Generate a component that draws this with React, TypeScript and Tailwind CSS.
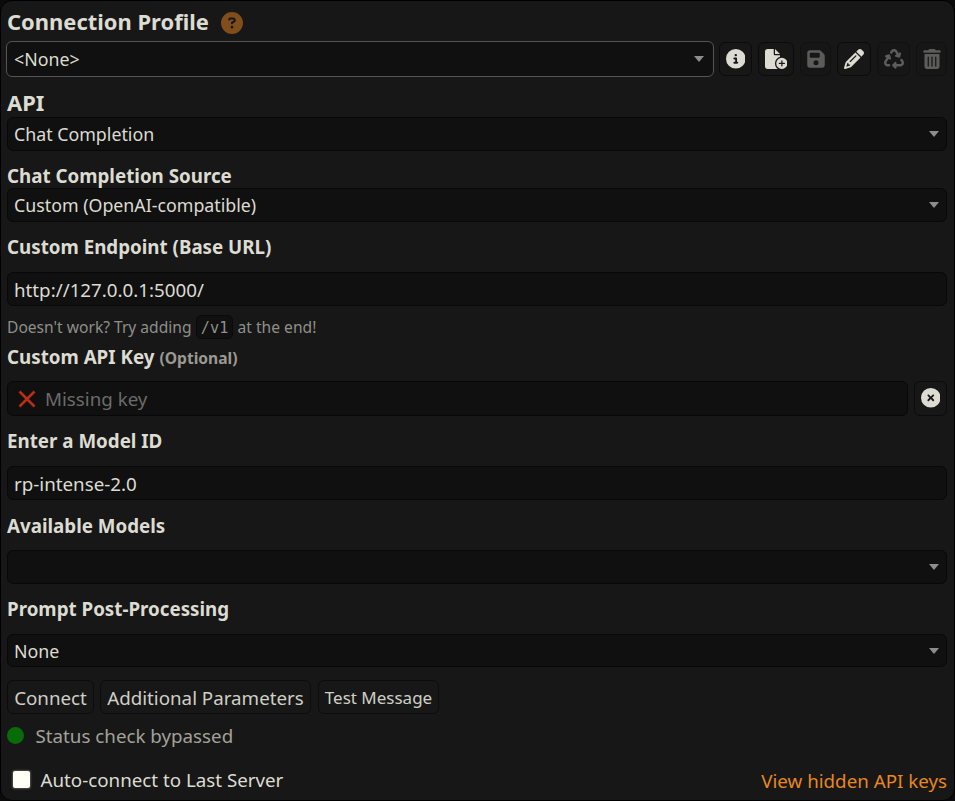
import type { ReactNode } from "react";
import {
  FaCircleInfo,
  FaCircleQuestion,
  FaCircleXmark,
  FaFileCirclePlus,
  FaFloppyDisk,
  FaPencil,
  FaRecycle,
  FaTrashCan,
} from "react-icons/fa6";

const field =
  "flex items-center rounded-[6px] border border-[#080808] bg-[#101010] px-[6px]";

function Caret() {
  return (
    <svg className="ml-auto mr-px h-[6px] w-[10px] shrink-0" viewBox="0 0 10 6">
      <path d="M0 0h10L5 6z" fill="#8d8d8d" />
    </svg>
  );
}

function Select({ value, className }: { value: string; className: string }) {
  return (
    <div className={`${field} text-[17.8px] ${className}`}>
      <span>{value}</span>
      <Caret />
    </div>
  );
}

function Heading({ children, className }: { children: ReactNode; className: string }) {
  return <h4 className={`flex items-center font-bold ${className}`}>{children}</h4>;
}

function IconButton({
  children,
  className,
  disabled = false,
}: {
  children: ReactNode;
  className: string;
  disabled?: boolean;
}) {
  return (
    <button
      className={`flex h-[34px] shrink-0 items-center justify-center rounded-[6px] border text-[20px] ${
        disabled ? "border-[#111111] bg-[#161616] text-[#5c5c5b]" : "border-[#0b0b0b] bg-[#171717]"
      } ${className}`}
    >
      {children}
    </button>
  );
}

const textButton =
  "flex h-[34px] items-center justify-center whitespace-nowrap rounded-[6px] border border-[#0c0c0c] pt-[2px]";

export default function App() {
  return (
    <div className="h-[801px] w-[955px] overflow-hidden bg-[#0b0b0b] font-['Noto_Sans',sans-serif] text-[18.75px] leading-6 text-[#dcdcd2]">
      <main className="flex h-[801px] w-[955px] flex-col rounded-[12px] border border-black bg-[#171717] pl-[6px] pr-[7px]">
        <h3 className="flex h-10 items-center pt-[2px] text-[21.95px] font-bold">
          <span className="-mt-px">Connection Profile</span>
          <FaCircleQuestion className="ml-3 mt-px size-[22px] text-[#7f4e1b]" />
        </h3>
        <div className="flex h-9 items-center">
          <div className={`${field} -ml-px mr-[5px] h-9 w-[708px] border-[#555555]! pl-[7px]! pr-[8px]! text-[17.8px]`}>
            <span>&lt;None&gt;</span>
            <Caret />
          </div>
          <IconButton className="mr-1.5 w-[33px] text-[19.6px]!"><FaCircleInfo /></IconButton>
          <IconButton className="mr-1.5 w-9"><FaFileCirclePlus className="h-5 w-[22.5px]" /></IconButton>
          <IconButton className="mr-1.5 w-[31px]" disabled><FaFloppyDisk /></IconButton>
          <IconButton className="mr-1.5 w-[34px]"><FaPencil /></IconButton>
          <IconButton className="mr-1.5 w-[33px]" disabled><FaRecycle /></IconButton>
          <IconButton className="w-[31px]" disabled><FaTrashCan /></IconButton>
        </div>
        <Heading className="h-10 pt-[11px] text-[21.95px]">API</Heading>
        <Select className="h-[34px]" value="Chat Completion" />
        <Heading className="h-[37px] pt-[13px]">Chat Completion Source</Heading>
        <Select className="h-[34px]" value="Custom (OpenAI-compatible)" />
        <Heading className="h-[50px]">Custom Endpoint (Base URL)</Heading>
        <div className={`${field} h-[34px] pt-[2px]`}>http://127.0.0.1:5000/</div>
        <div className="mt-[9px] flex h-6 items-center text-[15.6px] text-[#8f8f89]">
          Doesn't work? Try adding
          <code className="ml-[4px] mr-[5px] flex h-6 w-[37px] items-center justify-center rounded-[5px] border border-[#0a0a0a] bg-[#101010] pl-px pt-[2px] font-['DejaVu_Sans_Mono',monospace] text-[15.2px]">
            /v1
          </code>
          at the end!
        </div>
        <Heading className="h-[42px] pb-[6px]">
          Custom API Key
          <small className="ml-[5px] pt-[2px] text-[15.6px] text-[#9a9a93]">(Optional)</small>
        </Heading>
        <div className="flex gap-1.5">
          <div className={`${field} h-[35px] flex-1 text-[#6b6b69]`}>
            <svg className="ml-[4px] mr-[9px] size-[18px]" viewBox="0 0 18 18">
              <path d="M1.5 1.5l15 15M16.5 1.5l-15 15" stroke="#b82f16" strokeWidth="2.6" />
            </svg>
            Missing key
          </div>
          <IconButton className="h-[35px]! w-[33px] pb-px text-[19.6px]!"><FaCircleXmark /></IconButton>
        </div>
        <Heading className="h-[50px]">Enter a Model ID</Heading>
        <div className={`${field} h-[34px] pt-[2px]`}>rp-intense-2.0</div>
        <Heading className="h-[50px] pt-[2px]">Available Models</Heading>
        <Select className="h-[34px]" value="" />
        <Heading className="h-[50px]">Prompt Post-Processing</Heading>
        <Select className="h-[33px]" value="None" />
        <div className="mt-[13px] flex text-[#cfcfc6]">
          <button className={`${textButton} mr-1.5 w-[87px]`}>Connect</button>
          <button className={`${textButton} mr-[7px] w-[211px]`}>Additional Parameters</button>
          <button className={`${textButton} w-[121px] text-[17px]`}>Test Message</button>
        </div>
        <div className="mt-[9px] flex h-6 items-center text-[#a2a29a]">
          <span className="mr-[11.5px] size-[17px] rounded-full bg-[#086c08]" />
          <span className="pt-[2px]">Status check bypassed</span>
        </div>
        <div className="mt-[21px] flex h-6 items-center">
          <span className="mb-[2px] ml-[6px] mr-[10.5px] size-[17px] rounded-[2px] bg-[#fffff8] shadow-[0_0_2px_1px_#77777399]" />
          Auto-connect to Last Server
          <a className="ml-auto pt-px text-[#e8871f]">View hidden API keys</a>
        </div>
      </main>
    </div>
  );
}
